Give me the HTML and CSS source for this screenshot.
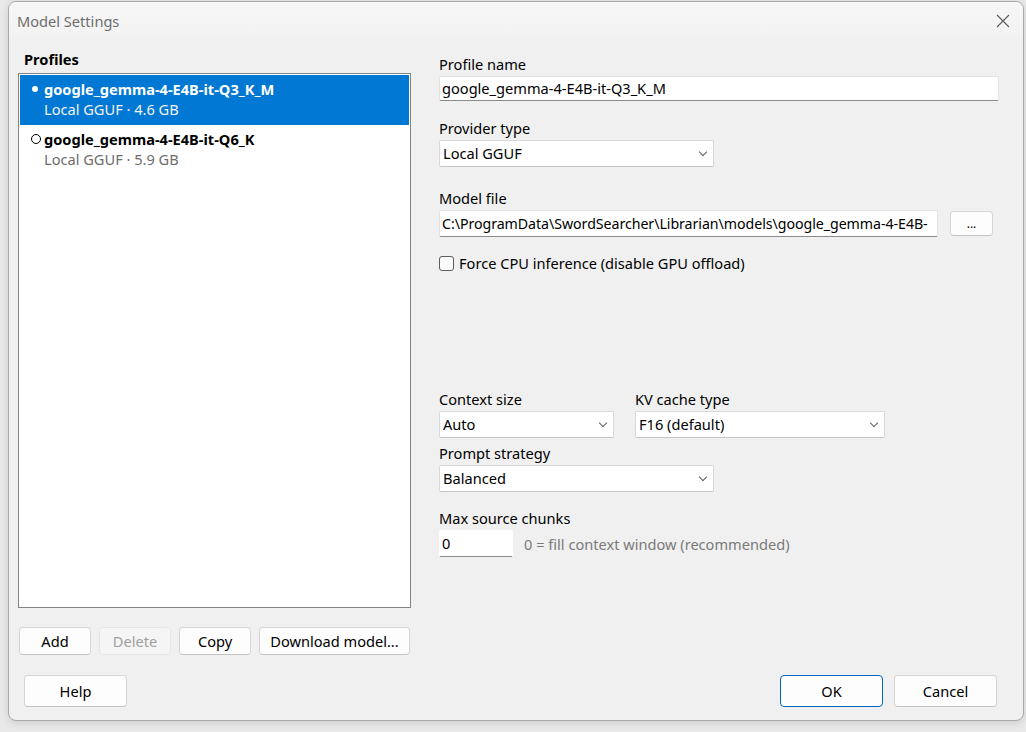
FILE: index.html
```html
<!DOCTYPE html>
<html lang="en">
<head>
    <meta charset="UTF-8">
    <title>Model Settings</title>
    <link rel="stylesheet" href="styles.css">
</head>
<body>

    <div class="dialog">
        <div class="titlebar">
            <span class="title">Model Settings</span>
            <svg class="close" width="14" height="14" viewBox="0 0 14 14">
                <path d="M1 1 L13 13 M13 1 L1 13" stroke="#5c5c5c" stroke-width="1.1" fill="none"/>
            </svg>
        </div>

        <div class="content">
            <!-- Profiles column -->
            <div class="left">
                <div class="section-label">Profiles</div>
                <div class="listbox">
                    <div class="profile selected">
                        <div class="profile-name"><span class="mark dot"></span>google_gemma-4-E4B-it-Q3_K_M</div>
                        <div class="profile-sub">Local GGUF · 4.6 GB</div>
                    </div>
                    <div class="profile">
                        <div class="profile-name"><span class="mark ring"></span>google_gemma-4-E4B-it-Q6_K</div>
                        <div class="profile-sub">Local GGUF · 5.9 GB</div>
                    </div>
                </div>
                <div class="list-buttons">
                    <button class="btn btn-small">Add</button>
                    <button class="btn btn-small" disabled>Delete</button>
                    <button class="btn btn-small">Copy</button>
                    <button class="btn btn-wide">Download model...</button>
                </div>
            </div>

            <!-- Profile fields -->
            <div class="right">
                <label class="field-label first">Profile name</label>
                <div class="textbox full">google_gemma-4-E4B-it-Q3_K_M</div>

                <label class="field-label">Provider type</label>
                <div class="combo combo-md">Local GGUF<span class="chevron"></span></div>

                <label class="field-label loose">Model file</label>
                <div class="file-row">
                    <div class="textbox file">C:\ProgramData\SwordSearcher\Librarian\models\google_gemma-4-E4B-</div>
                    <button class="btn btn-browse">...</button>
                </div>

                <div class="check-row">
                    <span class="checkbox"></span>
                    <span>Force CPU inference (disable GPU offload)</span>
                </div>

                <div class="pair">
                    <div class="pair-item">
                        <label class="field-label tight">Context size</label>
                        <div class="combo combo-sm">Auto<span class="chevron"></span></div>
                    </div>
                    <div class="pair-item">
                        <label class="field-label tight">KV cache type</label>
                        <div class="combo combo-kv">F16 (default)<span class="chevron"></span></div>
                    </div>
                </div>

                <label class="field-label tight">Prompt strategy</label>
                <div class="combo combo-md">Balanced<span class="chevron"></span></div>

                <label class="field-label chunk-label">Max source chunks</label>
                <div class="chunk-row">
                    <div class="textbox chunks">0</div>
                    <span class="hint">0 = fill context window (recommended)</span>
                </div>
            </div>
        </div>

        <div class="footer">
            <button class="btn btn-footer">Help</button>
            <div class="footer-right">
                <button class="btn btn-footer btn-default">OK</button>
                <button class="btn btn-footer">Cancel</button>
            </div>
        </div>
    </div>

</body>
</html>
```

FILE: styles.css
```css
/* Base */
:root {
    --color-face: #f0f0f0;
    --color-text: #000000;
    --color-muted: #6d6d6d;
    --color-accent: #0078d4;
    --color-border: #d6d6d6;
    --font-ui: "Noto Sans", "Open Sans", sans-serif;
}

* {
    margin: 0;
    padding: 0;
    box-sizing: border-box;
}

body {
    font-family: var(--font-ui);
    font-size: 14.6px;
    color: var(--color-text);
    background-color: #e9e9e9;
    width: 1026px;
    height: 732px;
    overflow: hidden;
}

button {
    font-family: inherit;
    font-size: 14.6px;
    color: var(--color-text);
}

/* Dialog frame */
.dialog {
    margin: 1px 0 0 8px;
    width: 1016px;
    height: 720px;
    background-color: var(--color-face);
    border: 1px solid #a9a9a9;
    border-radius: 8px;
    overflow: hidden;
    box-shadow: 0 2px 8px rgb(0 0 0 / 0.12);
    display: flex;
    flex-direction: column;
}

.titlebar {
    height: 37px;
    display: flex;
    align-items: center;
    justify-content: space-between;
    padding: 0 13px 0 8px;
    background: linear-gradient(#f7f7f7, #f2f2f2);
}

.title {
    color: #6e6e6e;
    font-size: 14.6px;
    line-height: 20px;
}

/* Body */
.content {
    display: flex;
    flex: 1;
    padding: 0 0 0 9px;
}

.left {
    width: 393px;
    padding-top: 10px;
}

.section-label {
    font-weight: bold;
    line-height: 20px;
    padding-left: 6px;
    margin-bottom: 4px;
}

.listbox {
    height: 535px;
    background-color: #ffffff;
    border: 1px solid #838383;
    padding: 1px;
}

.profile {
    height: 50px;
    padding: 4px 0 0 24px;
    line-height: 20px;
}

.profile.selected {
    background-color: var(--color-accent);
    color: #ffffff;
}

.profile-name {
    font-weight: bold;
    position: relative;
}

.profile-sub {
    color: var(--color-muted);
}

.selected .profile-sub {
    color: #f2f2f2;
}

.mark {
    position: absolute;
    top: 5px;
}

.mark.dot {
    left: -12px;
    top: 7px;
    width: 6px;
    height: 6px;
    border-radius: 50%;
    background-color: #ffffff;
}

.mark.ring {
    left: -13px;
    width: 10px;
    height: 10px;
    border-radius: 50%;
    border: 1.3px solid #000000;
}

.list-buttons {
    display: flex;
    gap: 8px;
    margin-top: 19px;
    padding-left: 1px;
}

/* Buttons */
.btn {
    height: 28px;
    background-color: #fdfdfd;
    border: 1px solid var(--color-border);
    border-bottom-color: #c4c4c4;
    border-radius: 4px;
}

.btn:disabled {
    background-color: #f5f5f5;
    border-color: #e6e6e6;
    color: #a0a0a0;
}

.btn-small {
    width: 72px;
}

.btn-wide {
    width: 151px;
}

.btn-browse {
    width: 43px;
    height: 25px;
    margin-left: 12px;
    margin-top: 1px;
    font-size: 12px;
    line-height: 12px;
}

.btn-footer {
    width: 103px;
    height: 32px;
}

.btn-default {
    border: 1px solid #0067c0;
}

/* Fields */
.right {
    width: 560px;
    margin-left: 28px;
    display: flex;
    flex-direction: column;
    align-items: flex-start;
}

.field-label {
    display: block;
    line-height: 20px;
    margin-top: 17px;
    margin-bottom: 2px;
}

.field-label.first {
    margin-top: 15px;
}

.field-label.loose {
    margin-top: 21px;
}

.field-label.tight {
    margin-top: 5px;
}

.field-label.chunk-label {
    margin-top: 16px;
}

.textbox {
    height: 25px;
    background-color: #ffffff;
    border: 1px solid #e3e3e3;
    border-bottom-color: #8a8a8a;
    border-radius: 2px;
    padding: 0 2px;
    line-height: 23px;
    white-space: nowrap;
    overflow: hidden;
}

.textbox.full {
    width: 560px;
}

.file-row {
    display: flex;
}

.textbox.file {
    width: 499px;
    height: 27px;
    line-height: 25px;
    font-size: 14.2px;
    letter-spacing: -0.05px;
}

.combo {
    position: relative;
    height: 27px;
    background-color: #ffffff;
    border: 1px solid #d9d9d9;
    border-bottom-color: #c6c6c6;
    border-radius: 2px;
    padding-left: 3px;
    line-height: 25px;
}

.combo-md {
    width: 275px;
}

.combo-sm {
    width: 175px;
}

.combo-kv {
    width: 250px;
}

.chevron {
    position: absolute;
    right: 7px;
    top: 8px;
    width: 6px;
    height: 6px;
    border-right: 1px solid #5f5f5f;
    border-bottom: 1px solid #5f5f5f;
    transform: rotate(45deg);
}

.check-row {
    display: flex;
    align-items: center;
    gap: 5px;
    margin-top: 16px;
    line-height: 20px;
}

.checkbox {
    width: 15px;
    height: 15px;
    border: 1px solid #5c5c5c;
    border-radius: 3px;
    background-color: #fbfbfb;
}

.pair {
    display: flex;
    gap: 21px;
    margin-top: 116px;
}

.pair .field-label.tight {
    margin-top: 0;
}

.chunk-row {
    display: flex;
    align-items: center;
    gap: 11px;
}

.textbox.chunks {
    width: 74px;
    height: 27px;
    line-height: 25px;
    border-color: #ffffff;
    border-bottom-color: #8a8a8a;
}

.hint {
    color: #7a7a7a;
}

/* Footer */
.footer {
    display: flex;
    justify-content: space-between;
    align-items: flex-start;
    padding: 0 26px 13px 15px;
}

.footer-right {
    display: flex;
    gap: 11px;
}
```
